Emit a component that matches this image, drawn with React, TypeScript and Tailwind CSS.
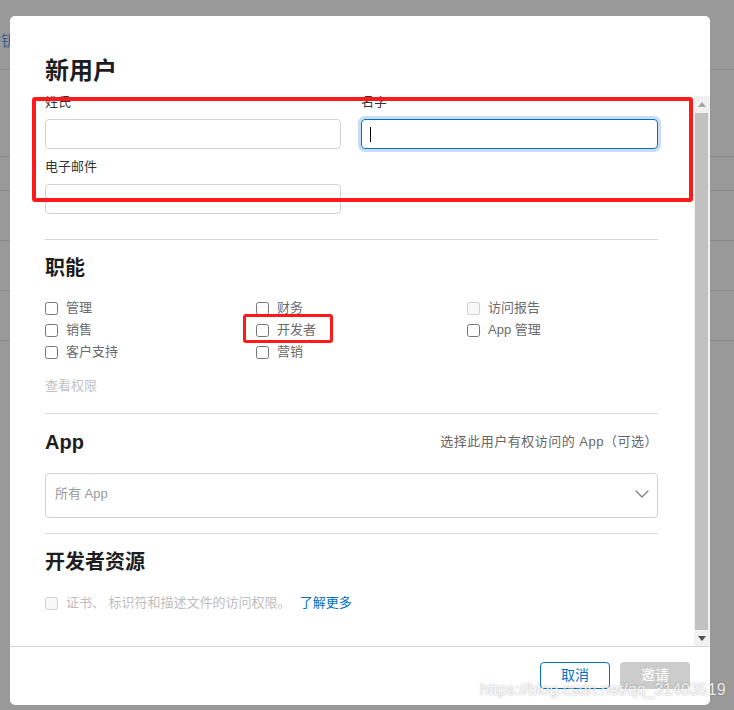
import { ChevronDown } from 'lucide-react';

function Field({ label, focused }: { label: string; focused?: boolean }) {
  return (
    <div className="flex flex-col">
      <span className="h-[18px] text-[13px] leading-[18px] text-[#333]">{label}</span>
      <div
        className={`mt-[8px] flex h-[30px] items-center rounded-[4px] border px-[8px] ${
          focused ? 'border-[#0070c9] shadow-[0_0_0_3px_#c9ddf2]' : 'border-[#d2d2d2]'
        }`}
      >
        {focused && <span className="h-[15px] w-px bg-black" />}
      </div>
    </div>
  );
}

function Check({ label, disabled }: { label: string; disabled?: boolean }) {
  return (
    <label className="flex h-[22px] items-center gap-2 text-[13px] text-[#6b6b6b]">
      <input type="checkbox" disabled={disabled} className="h-[13px] w-[13px]" />
      <span>{label}</span>
    </label>
  );
}

export default function App() {
  return (
    <div className="relative h-[710px] w-[734px] overflow-hidden bg-[#999] [font-family:'Liberation_Sans','Noto_Sans_CJK_SC',sans-serif]">
      {/* page behind the overlay */}
      <div className="flex flex-col">
        <div className="h-[70px] border-b border-[#888] pt-[29px]">
          <span className="-ml-[14px] inline-block whitespace-nowrap text-[15px] leading-[20px] text-[#355f8a]">密钥</span>
        </div>
        <div className="h-[87px] border-b border-[#888]" />
        <div className="h-[34px] border-b border-[#888]" />
        <div className="h-[50px] border-b border-[#888]" />
        <div className="h-[50px] border-b border-[#888]" />
        <div className="h-[50px] border-b border-[#888]" />
      </div>

      {/* modal */}
      <div className="absolute left-[10px] top-[16px] flex h-[689px] w-[700px] flex-col overflow-hidden rounded-[5px] bg-white">
        <div className="h-[80px] px-[35px] pt-[39px]">
          <h1 className="text-[24px] font-bold leading-[32px] text-[#1d1d1f]">新用户</h1>
        </div>

        <div className="flex h-[550px]">
          <div className="flex-1 overflow-hidden pl-[35px] pr-[36px]">
            <div className="-mt-[3px]">
              <div className="grid grid-cols-[296px_1fr] gap-x-[20px]">
                <Field label="姓氏" />
                <Field label="名字" focused />
              </div>
              <div className="mt-[9px] w-[296px]">
                <Field label="电子邮件" />
              </div>

              <div className="mt-[25px] border-t border-[#d6d6d6]" />
              <h2 className="mt-[14px] text-[20px] font-bold leading-[28px] text-[#1d1d1f]">职能</h2>
              <div className="mt-[15px] grid grid-cols-[211px_211px_1fr]">
                <div className="flex flex-col">
                  <Check label="管理" />
                  <Check label="销售" />
                  <Check label="客户支持" />
                </div>
                <div className="flex flex-col">
                  <Check label="财务" />
                  <Check label="开发者" />
                  <Check label="营销" />
                </div>
                <div className="flex flex-col">
                  <Check label="访问报告" disabled />
                  <Check label="App 管理" />
                </div>
              </div>
              <div className="mt-[14px] text-[13px] leading-[18px] text-[#c2c2c2]">查看权限</div>

              <div className="mt-[18px] border-t border-[#d6d6d6]" />
              <div className="mt-[14px] flex items-center justify-between">
                <h2 className="text-[20px] font-bold leading-[28px] text-[#1d1d1f]">App</h2>
                <span className="text-[13px] leading-[18px] tracking-[0.5px] text-[#666]">选择此用户有权访问的 App（可选）</span>
              </div>
              <div className="mt-[17px] flex h-[45px] items-center justify-between rounded-[4px] border border-[#d2d2d2] pb-[3px] pl-[9px] pr-[3px]">
                <span className="text-[13px] text-[#999]">所有 App</span>
                <ChevronDown size={24} strokeWidth={1.2} className="text-[#7a7a7a]" />
              </div>

              <div className="mt-[15px] border-t border-[#d6d6d6]" />
              <h2 className="mt-[14px] text-[20px] font-bold leading-[28px] text-[#1d1d1f]">开发者资源</h2>
              <label className="mt-[16px] flex h-[22px] items-center gap-2 text-[13px]">
                <input type="checkbox" disabled className="h-[13px] w-[13px]" />
                <span className="text-[#bdbdbd]">证书、 标识符和描述文件的访问权限。</span>
                <span className="ml-[1px] text-[#0070c9]">了解更多</span>
              </label>
            </div>
          </div>

          {/* scrollbar */}
          <div className="flex w-4 flex-col bg-[#f1f1f1]">
            <div className="flex h-[16px] items-center justify-center">
              <svg width="8" height="5" viewBox="0 0 8 5">
                <path d="M0 5 L4 0 L8 5 Z" fill="#a3a3a3" />
              </svg>
            </div>
            <div className="ml-px mr-[2px] mt-px flex-1 bg-[#c1c1c1]" />
            <div className="flex h-[16px] items-center justify-center">
              <svg width="8" height="5" viewBox="0 0 8 5">
                <path d="M0 0 L4 5 L8 0 Z" fill="#505050" />
              </svg>
            </div>
          </div>
        </div>

        <div className="flex flex-1 items-start justify-end gap-[10px] border-t border-[#d6d6d6] pr-[20px] pt-[15px]">
          <button className="h-[27px] w-[70px] rounded-[4px] border border-[#0070c9] text-[14px] text-[#0070c9]">取消</button>
          <button className="h-[27px] w-[70px] rounded-[4px] bg-[#cccccc] text-[14px] text-white">邀请</button>
        </div>
      </div>

      {/* annotations */}
      <div className="absolute left-[32px] top-[97px] h-[105px] w-[661px] rounded-[3px] border-[4px] border-[#fe1a1a]" />
      <div className="absolute left-[243px] top-[314px] h-[29px] w-[90px] rounded-[3px] border-[3px] border-[#fe1a1a]" />

      {/* watermark */}
      <div className="absolute left-[480px] top-[681px] text-[16px] leading-[18px] text-white/85 [text-shadow:0_0_2px_rgba(0,0,0,0.35)] [font-family:'Liberation_Sans',sans-serif]">
        https://blog.csdn.net/qq_31403519
      </div>
    </div>
  );
}
